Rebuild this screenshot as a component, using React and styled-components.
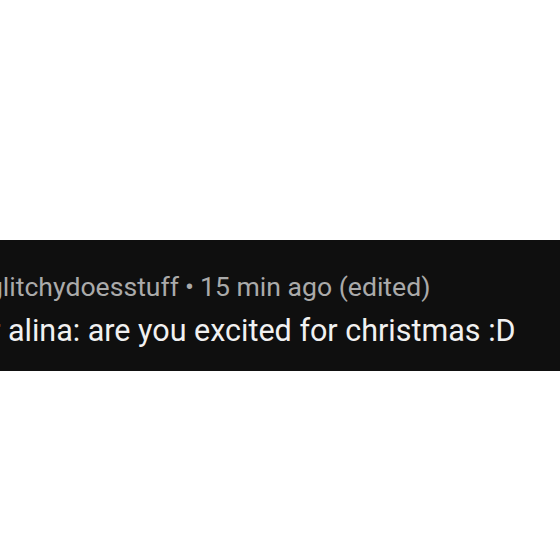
import React from "react";
import styled, { createGlobalStyle } from "styled-components";

const GlobalStyle = createGlobalStyle`
  html, body {
    margin: 0;
    padding: 0;
    background: #ffffff;
  }
  body {
    width: 560px;
    height: 560px;
    overflow: hidden;
    font-family: Roboto, "Liberation Sans", sans-serif;
  }
`;

const Page = styled.div`
  display: flex;
  flex-direction: column;
  padding-top: 240px;
`;

const Comment = styled.div`
  box-sizing: border-box;
  background-color: #0f0f0f;
  height: 131px;
  padding-top: 8px;
  overflow: hidden;
  display: flex;
  flex-direction: column;
  justify-content: center;
  gap: 10px;
`;

const Meta = styled.div`
  color: #aaaaaa;
  font-size: 26.6px;
  line-height: 32px;
  white-space: nowrap;
  margin-left: ${(p) => p.$shift}px;
  .dot {
    margin: 0 6px;
  }
`;

const Body = styled.div`
  color: #f1f1f1;
  font-size: 30.5px;
  line-height: 36px;
  white-space: nowrap;
  margin-left: ${(p) => p.$shift}px;
`;

export default function App() {
  return (
    <>
      <GlobalStyle />
      <Page>
        <Comment>
          <Meta $shift={-36}>
            @glitchydoesstuff<span className="dot">•</span>15 min ago (edited)
          </Meta>
          <Body $shift={-38}>for alina: are you excited for christmas :D</Body>
        </Comment>
      </Page>
    </>
  );
}
